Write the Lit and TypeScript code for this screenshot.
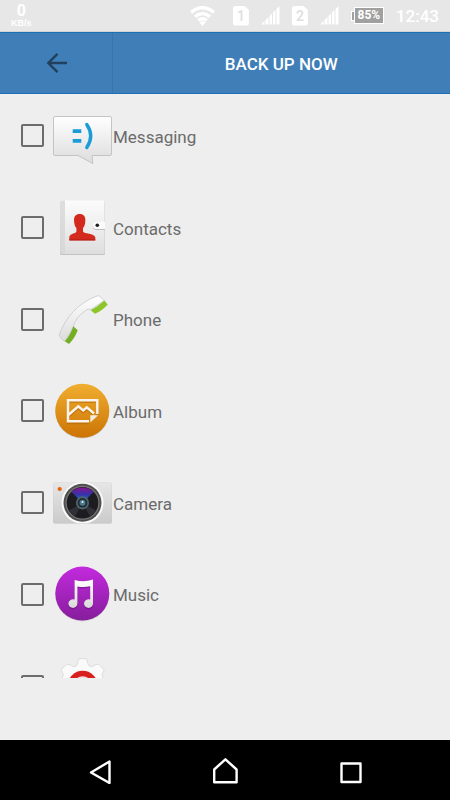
import { LitElement, html, css, svg, nothing } from "lit";
import { customElement } from "lit/decorators.js";

const icons: Record<string, unknown> = {
  Messaging: svg`
    <defs><linearGradient id="msg" x1="0" y1="0" x2="0" y2="1"><stop offset="0" stop-color="#fff"/><stop offset="1" stop-color="#dcdcdc"/></linearGradient></defs>
    <path d="M3 10.5H58Q59.5 10.5 59.5 12V48Q59.5 49.5 58 49.5H40L40.8 57.5L26 49.5H3Q1.5 49.5 1.5 48V12Q1.5 10.5 3 10.5Z" fill="url(#msg)" stroke="#c4c4c4" stroke-width="1"/>
    <path d="M20.7 23.3h8.6v3.8h-8.6zM20.7 33h8.6v3.8h-8.6z" fill="#1b9cd9"/>
    <path d="M34.8 18.5Q42.6 30 34.8 41.5" fill="none" stroke="#1b9cd9" stroke-width="3.4" stroke-linecap="round"/>`,
  Contacts: svg`
    <defs><linearGradient id="book" x1="0" y1="0" x2="0" y2="1"><stop offset="0" stop-color="#fcfcfc"/><stop offset="1" stop-color="#dedede"/></linearGradient></defs>
    <rect x="8" y="3" width="45" height="54" rx="1.5" fill="#c3c3c3"/>
    <rect x="8.4" y="2.5" width="44.2" height="53.5" rx="1.5" fill="url(#book)"/>
    <path d="M8.4 4Q8.4 2.5 10 2.5H13V56H10Q8.4 56 8.4 54Z" fill="#d6d6d6" opacity=".8"/>
    <path d="M17.3 42.3V39C18 35.2 23.6 36 24.4 33.5V30C22.8 28.4 22.2 26 22.1 23C21.6 18 24 15.9 27.7 15.9S33.8 18 33.3 23C33.2 26 32.6 28.4 31 30V33.5C31.8 36 42.3 35.2 43.3 39.5V42.3Z" fill="#d42a1e"/>
    <path d="M17.3 41.3H43.3V42.5H17.3Z" fill="#b81d12"/>
    <path d="M53 24.7H44.5a3.6 3.6 0 0 0 0 7.2H53Z" fill="#bdbdbd"/>
    <path d="M53 23.7H44.5a3.6 3.6 0 0 0 0 7.2H53Z" fill="#fbfbfb"/>
    <circle cx="45.3" cy="27.3" r="1.8" fill="#1b1b1b"/>`,
  Phone: svg`
    <defs><linearGradient id="tel" x1="0" y1="0" x2="0" y2="1"><stop offset="0" stop-color="#fff"/><stop offset="1" stop-color="#dcdcdc"/></linearGradient></defs>
    <path d="M7.3 45.6C13 29 26 14 45 7Q46.5 6.4 47.7 7.3L52.5 11.5L39 20.5Q36 19.3 33.5 21.5Q24 28 21.3 37.3L13 52.3Q8 50 7.3 45.6Z" fill="url(#tel)" stroke="#c9c9c9" stroke-width=".8"/>
    <path d="M52.3 11.6L55.7 15.4Q51 21 43 24.8L38.6 21.3Q46.5 17.5 52.3 11.6Z" fill="#8cc62b"/>
    <path d="M21.3 37.3L25.7 41.3Q23 49 17 55L12.8 52.3Q18.5 46 21.3 37.3Z" fill="#74ae25"/>`,
  Album: svg`
    <defs><linearGradient id="alb" x1="0" y1="0" x2="0" y2="1"><stop offset="0" stop-color="#f0ae30"/><stop offset="1" stop-color="#cc7404"/></linearGradient></defs>
    <circle cx="30.3" cy="30.6" r="27" fill="#bdbdbd" opacity=".6"/>
    <circle cx="30.3" cy="29.8" r="27" fill="url(#alb)"/>
    <g fill="none" stroke="#ac6206" stroke-width="2.4" opacity=".5" transform="translate(0 1.5)"><path d="M37 40.5H16V19.4H45.3V33M16 34.5L26.3 25.5L31.2 29.6L34.8 26.5L41 32"/></g>
    <path d="M37 40.3H16V19.2H45.3V33M16 34.3L26.3 25.3L31.2 29.4L34.8 26.3L42 32.5" fill="none" stroke="#fbf4ec" stroke-width="2.5"/>
    <path d="M38.3 41.4V34.2H46.2Z" fill="#f6ece0"/>`,
  Camera: svg`
    <defs><linearGradient id="cam" x1="0" y1="0" x2="0" y2="1"><stop offset="0" stop-color="#e6e6e6"/><stop offset="1" stop-color="#cbcbcb"/></linearGradient>
    <linearGradient id="glare" x1="0" y1="0" x2="0" y2="1"><stop offset="0" stop-color="#8a1292"/><stop offset=".45" stop-color="#3632a8"/><stop offset="1" stop-color="#2a7fd0"/></linearGradient>
    <clipPath id="body"><rect x="1.3" y="9.3" width="58.4" height="41.2" rx="1.5"/></clipPath></defs>
    <rect x="1.3" y="9.6" width="58.4" height="41" rx="1.5" fill="#bcbcbc"/>
    <rect x="1.3" y="9.3" width="58.4" height="40.7" rx="1.5" fill="url(#cam)"/>
    <g clip-path="url(#body)"><circle cx="30.5" cy="29.8" r="21" fill="#fafafa"/><circle cx="30.5" cy="29.8" r="19" fill="#505050"/></g>
    <circle cx="30.5" cy="29.8" r="17" fill="#777"/>
    <circle cx="30.5" cy="29.8" r="15.8" fill="#1c1c21"/>
    <path d="M30.5 29.8L19.5 19A15.6 15.6 0 0 1 41.5 19Z" fill="url(#glare)"/>
    <path d="M30.5 29.8L17 37.5A15.6 15.6 0 0 0 23 43.5ZM30.5 29.8L44 37.5A15.6 15.6 0 0 1 38 43.5Z" fill="#303036"/>
    <circle cx="30.5" cy="29.8" r="6.6" fill="#4c6670"/><circle cx="30.5" cy="29.8" r="4.8" fill="#242b31"/>
    <circle cx="30.5" cy="29.8" r="3" fill="#4c7c8c"/><circle cx="30.5" cy="29" r="1" fill="#e6f7fb"/>
    <circle cx="7.7" cy="16" r="2.1" fill="#e8650c"/>`,
  Music: svg`
    <defs><linearGradient id="mus" x1="0" y1="0" x2="0" y2="1"><stop offset="0" stop-color="#c32ade"/><stop offset="1" stop-color="#861d9c"/></linearGradient>
    <linearGradient id="note" x1="0" y1="0" x2="0" y2="1"><stop offset="0" stop-color="#fff"/><stop offset="1" stop-color="#d9d9d9"/></linearGradient></defs>
    <circle cx="30.3" cy="30.4" r="27" fill="#bdbdbd" opacity=".6"/>
    <circle cx="30.3" cy="29.6" r="27" fill="url(#mus)"/>
    <path transform="translate(0 1.5)" opacity=".35" fill="#4a0858" d="M22.6 16Q32 18.6 41 15.6V39.5A4.5 4.3 0 1 1 38.2 35.6V22.2Q32 23.6 25.4 22.4V39.5A4.5 4.3 0 1 1 22.6 35.6Z"/>
    <path fill="url(#note)" d="M22.6 16Q32 18.6 41 15.6V39.5A4.5 4.3 0 1 1 38.2 35.6V22.2Q32 23.6 25.4 22.4V39.5A4.5 4.3 0 1 1 22.6 35.6Z"/>`,
  Settings: svg`
    <path d="M27.8 2.6H33.6Q34.6 2.6 35 4L36 8Q36.6 10.4 39.5 10.8L42 9.4L45.5 8.2Q46.5 8 47.3 8.8L51.6 13Q52.4 14 51.8 15L50 18.5L53 28V40H8V28L11.4 18.5L9.6 15Q9 14 9.8 13L14 8.8Q14.8 8 15.8 8.2L19.4 9.4L22 10.8Q24.8 10.4 25.4 8L26.4 4Q26.8 2.6 27.8 2.6Z" fill="#fafafa" stroke="#d6d6d6" stroke-width=".8"/>
    <circle cx="30.7" cy="29.8" r="15" fill="#d8201f"/><circle cx="30.7" cy="29.8" r="9.6" fill="#f4dada"/>`,
};

@customElement("status-bar")
class StatusBar extends LitElement {
  static styles = css`
    :host { display: flex; align-items: center; gap: 12px; height: 32px; padding: 0 11px; box-sizing: border-box; background: #e7e7e7; border-bottom: 1px solid #d4d4d4; color: #fff; font-family: Roboto, sans-serif; }
    .rate { display: flex; flex-direction: column; align-items: center; margin-right: auto; font-weight: 700; }
    .num { font-size: 16px; line-height: 16px; }
    .unit { font: 700 9px/9px "Liberation Sans", sans-serif; }
    svg { display: block; flex: none; }
    .wifi { margin-right: 6px; }
    .sim { display: grid; place-items: center; width: 16px; height: 20px; background: #fff; color: #dedede; font-size: 14px; font-weight: 500; line-height: 20px; border-radius: 3px; clip-path: polygon(0 0, 70% 0, 100% 22%, 100% 100%, 0 100%); }
    .battery { display: flex; align-items: center; }
    .tip { width: 2px; height: 8px; background: #a0a0a0; border: 1px solid #fff; border-right: 0; }
    .cell { box-sizing: border-box; width: 30px; height: 17px; border: 1px solid #fff; background: #a0a0a0; font-size: 12px; font-weight: 700; line-height: 15px; text-align: center; }
    .time { font-size: 17px; line-height: 20px; font-weight: 500; }
  `;
  signal() {
    return html`<svg width="19" height="19" viewBox="0 0 19 19" fill="#fff"><path d="M0 18.5L3.5 15V18.5ZM4.5 14L7.5 11V18.5H4.5ZM8.5 10L11 7.5V18.5H8.5ZM12 6.5L14.5 4V18.5H12ZM15.5 3L18.5 0V18.5H15.5Z"/></svg>`;
  }
  render() {
    return html`
      <div class="rate"><span class="num">0</span><span class="unit">KB/s</span></div>
      <svg class="wifi" width="25" height="20" viewBox="0 0 25 20"><g fill="none" stroke="#fff" stroke-width="3.4"><path d="M1.2 6.3Q12.5-2.7 23.8 6.3"/><path d="M5 10.6Q12.5 4.4 20 10.6"/><path d="M8.2 14.4Q12.5 11 16.8 14.4"/></g><path d="M9.4 16.3Q12.5 14.2 15.6 16.3L12.5 20Z" fill="#fff"/></svg>
      <span class="sim">1</span>
      ${this.signal()}
      <span class="sim">2</span>
      ${this.signal()}
      <span class="battery"><span class="tip"></span><span class="cell">85%</span></span>
      <span class="time">12:43</span>
    `;
  }
}

@customElement("backup-item")
class BackupItem extends LitElement {
  static properties = { name: {}, peeking: { type: Boolean } };
  declare name: string;
  declare peeking: boolean;
  static styles = css`
    :host { display: flex; align-items: center; padding: 0 21px 8px; min-height: 0; }
    .row { display: flex; align-items: center; font: 400 17px/24px Roboto, sans-serif; color: #6b6b6b; }
    .box { appearance: none; flex: none; box-sizing: border-box; width: 23px; height: 23px; margin: 0 8px 0 0; border: 2px solid #6c6c6c; border-radius: 2px; }
    .box:checked { background: #407eb7; }
    .icon { display: block; flex: none; margin-right: 1px; }
    .name { padding-top: 2px; }
  `;
  render() {
    return html`<label class="row">
      <input class="box" type="checkbox" aria-label=${this.name} />
      <svg class="icon" width="60" height="60" viewBox="0 0 60 60" aria-hidden="true">${icons[this.name]}</svg>
      ${this.peeking ? nothing : html`<span class="name">${this.name}</span>`}
    </label>`;
  }
}

@customElement("app-root")
class AppRoot extends LitElement {
  static styles = css`
    :host { display: flex; flex-direction: column; height: 100vh; background: #eee; font-family: Roboto, sans-serif; }
    button { appearance: none; margin: 0; padding: 0; border: 0; background: none; font: inherit; color: inherit; display: grid; place-items: center; }
    .toolbar { display: grid; grid-template-columns: 1fr 3fr; flex: none; height: 62px; box-sizing: border-box; background: #407eb7; border: solid #1a72b4; border-width: 1px 0; color: #fff; }
    .toolbar .back { border-right: 1px solid #3873aa; }
    .toolbar .action { font-size: 17px; line-height: 24px; font-weight: 500; padding-top: 2px; }
    .list { flex: 1; min-height: 0; overflow: hidden; margin-bottom: 62px; }
    .items { display: grid; height: 642px; grid-template-rows: repeat(7, 1fr); }
    .nav { flex: none; display: grid; grid-template-columns: repeat(3, 1fr); height: 60px; padding: 0 38px; background: #000; }
    svg { display: block; }
    .nav svg { fill: none; stroke: #fff; stroke-width: 2.4; stroke-linejoin: round; }
  `;
  render() {
    const names = Object.keys(icons);
    return html`
      <status-bar></status-bar>
      <header class="toolbar">
        <button class="back" aria-label="Back"><svg width="24" height="24" viewBox="0 0 24 24" fill="none" stroke="#20405e" stroke-width="2.4"><path d="M23 12H4.5M13.5 2.8L4.3 12L13.5 21.2"/></svg></button>
        <button class="action">BACK UP NOW</button>
      </header>
      <main class="list"><div class="items">
        ${names.map((n, i) => html`<backup-item .name=${n} .peeking=${i === names.length - 1}></backup-item>`)}
      </div></main>
      <nav class="nav">
        <button aria-label="Back"><svg width="26" height="28" viewBox="0 0 26 28"><path d="M4 16.5L22.5 5.5V27Z"/></svg></button>
        <button aria-label="Home"><svg width="26" height="28" viewBox="0 0 26 28"><path d="M2.2 26.2V13.5L13.4 3.3L24.6 13.5V26.2Z"/></svg></button>
        <button aria-label="Recent apps"><svg width="26" height="28" viewBox="0 0 26 28"><path d="M4.5 7.5H23.5V26H4.5Z"/></svg></button>
      </nav>
    `;
  }
}
